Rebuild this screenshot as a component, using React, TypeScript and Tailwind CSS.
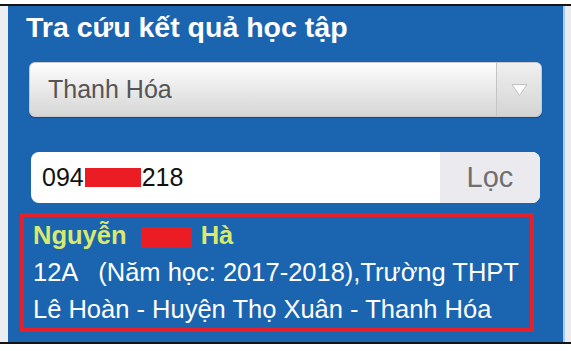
import React from 'react';

const Redact: React.FC<{ className?: string }> = ({ className }) => (
  <span className={`inline-block bg-[#ec1c24] align-middle ${className ?? ''}`} />
);

export default function App() {
  return (
    <div className="w-[571px] h-[351px] bg-white overflow-hidden font-['Liberation_Sans',Arial,sans-serif]">
      <div className="h-[4px]" />
      <div className="h-[2px] bg-[#141414]" />
      <div className="flex h-[336px] bg-[#eceef2]">
        <div className="w-[8px]" />
        <div className="w-[555px] bg-[#1a64b0] flex flex-col pt-[5px]">
          <h1 className="pl-[18px] text-[28.5px] leading-[33px] font-bold text-white">
            Tra cứu kết quả học tập
          </h1>

          <div className="mt-[18px] ml-[21px] w-[513px] h-[55px] flex rounded-[6px] border border-[#c9c9c9] bg-gradient-to-b from-[#fdfdfd] to-[#d6d6d6] shadow-[0_1px_1px_rgba(0,0,0,0.25)]">
            <div className="flex-1 flex items-center pl-[18px] text-[25px] text-[#555]">Thanh Hóa</div>
            <div className="w-[45px] flex items-center justify-center border-l border-[#c4c4c4] bg-gradient-to-b from-[#f0f0f0] to-[#d4d4d4] rounded-r-[6px]">
              <svg width="17" height="14" viewBox="0 0 17 14">
                <path d="M1 1.5 H16 L8.5 12.5 Z" fill="#fbfbfb" stroke="#c2c2c2" strokeWidth="1" strokeLinejoin="round" />
              </svg>
            </div>
          </div>

          <div className="mt-[35px] ml-[23px] w-[509px] h-[51px] flex rounded-[8px] bg-white overflow-hidden">
            <div className="flex-1 flex items-center pl-[11px] text-[25px] text-[#111]">
              094<Redact className="w-[56px] h-[19px] mx-px" />218
            </div>
            <div className="w-[100px] flex items-center justify-center bg-[#ebebef] text-[29px] text-[#707070]">
              Lọc
            </div>
          </div>

          <div className="mt-[10px] ml-[12px] w-[514px] border-[4px] border-[#e5202b] pl-[9px] text-[25.5px] leading-[37px] text-white">
            <div className="font-bold text-[#d8e96f]">
              Nguyễn <Redact className="w-[51px] h-[21px] ml-[7px] mr-[2px]" /> Hà
            </div>
            <div className="whitespace-pre">12A   (Năm học: 2017-2018),Trường THPT</div>
            <div>Lê Hoàn - Huyện Thọ Xuân - Thanh Hóa</div>
          </div>
        </div>
        <div className="w-[2px] bg-[#a9c9ee]" />
        <div className="flex-1 bg-[#e9ebef]" />
      </div>
      <div className="h-[2px] bg-[#141414]" />
    </div>
  );
}
